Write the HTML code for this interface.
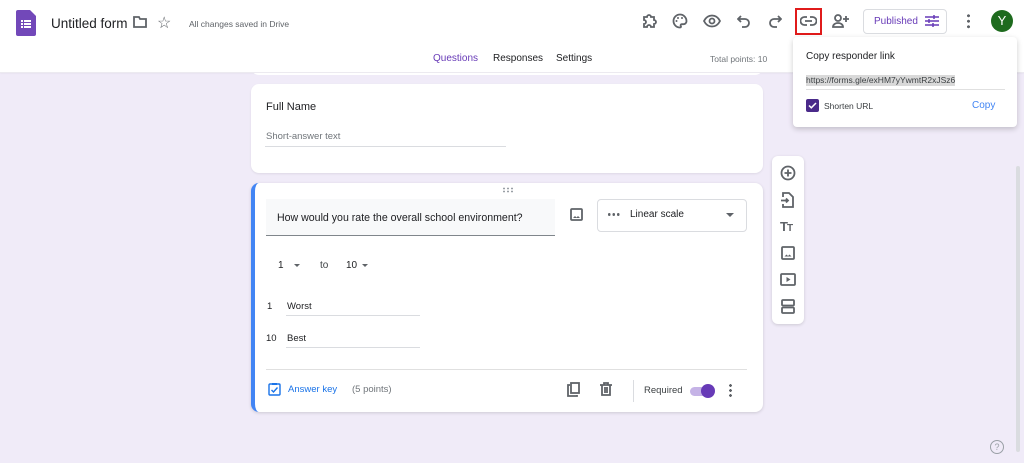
<!DOCTYPE html>
<html><head><meta charset="utf-8"><style>
*{box-sizing:border-box;margin:0;padding:0}
body{width:1024px;height:463px;overflow:hidden;background:#f0ebf8;font-family:"Liberation Sans",sans-serif;position:relative;color:#202124}
.abs{position:absolute}
svg{display:block}
.ic{stroke:#5f6368;fill:none;stroke-width:1.8}
</style></head><body>
<div class="abs" style="left:0;top:0;width:1024px;height:72px;background:#fff;box-shadow:0 1px 2px rgba(0,0,0,.08)"></div>
<svg class="abs" style="left:16px;top:10px" width="20" height="26" viewBox="0 0 20 26"><path d="M0 2a2 2 0 0 1 2-2h12l6 6v18a2 2 0 0 1-2 2H2a2 2 0 0 1-2-2z" fill="#7248b9"/><g fill="#fff"><rect x="5" y="10" width="2" height="2"/><rect x="8" y="10" width="7" height="2"/><rect x="5" y="13" width="2" height="2"/><rect x="8" y="13" width="7" height="2"/><rect x="5" y="16" width="2" height="2"/><rect x="8" y="16" width="7" height="2"/></g></svg>
<div class="abs" style="left:51px;top:16px;font-size:13.5px;color:#202124">Untitled form</div>
<svg class="abs" style="left:133px;top:16px" width="14" height="12" viewBox="0 0 14 12"><path d="M1 1h5l1 2h6v8H1z" class="ic" stroke-width="1.4"/></svg>
<div class="abs" style="left:157px;top:13px;font-size:16px;color:#5f6368">☆</div>
<div class="abs" style="left:189px;top:19px;font-size:8.5px;color:#5f6368">All changes saved in Drive</div>
<svg class="abs" style="left:641px;top:13px" width="16" height="16" viewBox="0 0 16 16"><path d="M3 4h3a2 2 0 0 1 4 0h3v3a2 2 0 0 1 0 4v3H10a2 2 0 0 0-4 0H3v-3a2 2 0 0 0 0-4z" class="ic" stroke-width="1.4"/></svg>
<svg class="abs" style="left:672px;top:13px" width="16" height="16" viewBox="0 0 16 16"><path d="M8 1.5a6.5 6.5 0 0 0 0 13c1 0 1.3-.8.8-1.5-.5-.8 0-1.8 1-1.8h1.700a3 3 0 0 0 3-3C14.5 4.5 11.6 1.5 8 1.5z" class="ic" stroke-width="1.4"/><circle cx="4.5" cy="8" r="1" fill="#5f6368"/><circle cx="6" cy="5" r="1" fill="#5f6368"/><circle cx="10" cy="5" r="1" fill="#5f6368"/></svg>
<svg class="abs" style="left:703px;top:14px" width="18" height="14" viewBox="0 0 18 14"><path d="M1 7c2-4 5-5.5 8-5.5S15 3 17 7c-2 4-5 5.5-8 5.5S3 11 1 7z" class="ic" stroke-width="1.5"/><circle cx="9" cy="7" r="2.5" class="ic" stroke-width="1.5"/></svg>
<svg class="abs" style="left:737px;top:14px" width="14" height="14" viewBox="0 0 14 14"><path d="M4 2L1 5l3 3M1 5h7a4 4 0 0 1 0 8H5" class="ic" stroke-width="1.5"/></svg>
<svg class="abs" style="left:768px;top:14px" width="14" height="14" viewBox="0 0 14 14"><path d="M10 2l3 3-3 3M13 5H6a4 4 0 0 0 0 8h3" class="ic" stroke-width="1.5"/></svg>
<div class="abs" style="left:795px;top:8px;width:27px;height:27px;border:2px solid #e01b1b"></div>
<svg class="abs" style="left:800px;top:15px" width="17" height="12" viewBox="0 0 17 12"><path d="M7 2H4.5a4 4 0 0 0 0 8H7M10 2h2.5a4 4 0 0 1 0 8H10M5 6h7" class="ic" stroke-width="1.6"/></svg>
<svg class="abs" style="left:832px;top:13px" width="18" height="16" viewBox="0 0 18 16"><circle cx="6" cy="5" r="3" class="ic" stroke-width="1.4"/><path d="M1 14c0-3 3-4 5-4s5 1 5 4z" class="ic" stroke-width="1.4"/><path d="M14 3v6M11 6h6" class="ic" stroke-width="1.4"/></svg>
<div class="abs" style="left:863px;top:9px;width:84px;height:25px;border:1px solid #dadce0;border-radius:4px"></div>
<div class="abs" style="left:874px;top:16px;font-size:10px;color:#673ab7">Published</div>
<svg class="abs" style="left:925px;top:14px" width="14" height="14" viewBox="0 0 14 14"><path d="M0 3h14M0 7h14M0 11h14M9 1v4M4 5v4M8 9v4" stroke="#673ab7" stroke-width="1.5" fill="none"/></svg>
<div class="abs" style="left:967px;top:13px;width:3px;height:16px;background:radial-gradient(circle,#5f6368 1.4px,transparent 1.6px) 0 0/3px 5.5px"></div>
<div class="abs" style="left:991px;top:10px;width:22px;height:22px;border-radius:50%;background:#1e6b1e;color:#fff;font-size:13px;text-align:center;line-height:22px">Y</div>
<div class="abs" style="left:433px;top:53px;font-size:10px;color:#673ab7">Questions</div>
<div class="abs" style="left:426px;top:68px;width:58px;height:3px;background:#673ab7;border-radius:3px 3px 0 0"></div>
<div class="abs" style="left:493px;top:53px;font-size:10px;color:#202124">Responses</div>
<div class="abs" style="left:556px;top:53px;font-size:10px;color:#202124">Settings</div>
<div class="abs" style="left:710px;top:54px;font-size:8.5px;color:#70757a">Total points: 10</div>
<div class="abs" style="left:251px;top:66px;width:512px;height:9px;background:#fff;border-radius:0 0 8px 8px"></div>
<div class="abs" style="left:0;top:72px;width:1024px;height:1px;background:#eceaf0"></div>
<div class="abs" style="left:251px;top:84px;width:512px;height:89px;background:#fff;border-radius:8px;box-shadow:0 1px 2px rgba(0,0,0,.08)"></div>
<div class="abs" style="left:266px;top:101px;font-size:11px">Full Name</div>
<div class="abs" style="left:266px;top:131px;font-size:9.5px;color:#70757a">Short-answer text</div>
<div class="abs" style="left:265px;top:146px;width:241px;height:1px;background:#dadce0"></div>
<div class="abs" style="left:251px;top:183px;width:512px;height:229px;background:#fff;border-radius:8px;box-shadow:0 1px 3px rgba(0,0,0,.15);border-left:4px solid #4285f4"></div>
<div class="abs" style="left:502px;top:187px;width:11px;height:6px;background:radial-gradient(circle,#9aa0a6 0.8px,transparent 1px) 0 0/4px 3px"></div>
<div class="abs" style="left:266px;top:199px;width:289px;height:37px;background:#f8f9fa;border-bottom:1px solid #80868b"></div>
<div class="abs" style="left:277px;top:212px;font-size:10.6px">How would you rate the overall school environment?</div>
<svg class="abs" style="left:570px;top:208px" width="13" height="13" viewBox="0 0 13 13"><rect x="1" y="1" width="11" height="11" rx="1" class="ic" stroke-width="1.4"/><path d="M3 10l2-2 1.5 1.5L8 8l2 2z" fill="#5f6368"/></svg>
<div class="abs" style="left:597px;top:199px;width:150px;height:33px;border:1px solid #dadce0;border-radius:4px"></div>
<div class="abs" style="left:607px;top:213px;width:13px;height:3px;background:radial-gradient(circle,#5f6368 1.3px,transparent 1.5px) 0 0/4.5px 3px"></div>
<div class="abs" style="left:630px;top:209px;font-size:10px">Linear scale</div>
<div class="abs" style="left:726px;top:213px;border:4px solid transparent;border-top:4px solid #5f6368"></div>
<div class="abs" style="left:278px;top:260px;font-size:10px">1</div>
<div class="abs" style="left:294px;top:264px;border:3.5px solid transparent;border-top:3.5px solid #5f6368"></div>
<div class="abs" style="left:320px;top:260px;font-size:10px;color:#3c4043">to</div>
<div class="abs" style="left:346px;top:260px;font-size:10px">10</div>
<div class="abs" style="left:362px;top:264px;border:3.5px solid transparent;border-top:3.5px solid #5f6368"></div>
<div class="abs" style="left:267px;top:301px;font-size:9.5px">1</div>
<div class="abs" style="left:287px;top:301px;font-size:9.5px">Worst</div>
<div class="abs" style="left:286px;top:315px;width:134px;height:1px;background:#dadce0"></div>
<div class="abs" style="left:266px;top:333px;font-size:9.5px">10</div>
<div class="abs" style="left:287px;top:333px;font-size:9.5px">Best</div>
<div class="abs" style="left:286px;top:347px;width:134px;height:1px;background:#dadce0"></div>
<div class="abs" style="left:266px;top:369px;width:481px;height:1px;background:#e0e0e0"></div>
<svg class="abs" style="left:268px;top:382px" width="13" height="14" viewBox="0 0 13 14"><rect x="1" y="2" width="11" height="11" rx="1" stroke="#1a73e8" stroke-width="1.4" fill="none"/><path d="M4 1h5v2H4z" fill="#1a73e8"/><path d="M3.5 8l2 2 4-4.5" stroke="#1a73e8" stroke-width="1.4" fill="none"/></svg>
<div class="abs" style="left:288px;top:384px;font-size:9.5px;color:#1a73e8">Answer key</div>
<div class="abs" style="left:352px;top:384px;font-size:9.5px;color:#70757a">(5 points)</div>
<svg class="abs" style="left:567px;top:382px" width="14" height="15" viewBox="0 0 14 15"><path d="M3 3H1v11h9v-1" class="ic" stroke-width="1.4"/><rect x="4" y="1" width="8" height="10" class="ic" stroke-width="1.4"/></svg>
<svg class="abs" style="left:600px;top:382px" width="12" height="14" viewBox="0 0 12 14"><path d="M0 3h12M4 3V1h4v2M2 3v10h8V3M5 5v6M7 5v6" class="ic" stroke-width="1.3"/></svg>
<div class="abs" style="left:633px;top:380px;width:1px;height:22px;background:#dadce0"></div>
<div class="abs" style="left:644px;top:385px;font-size:9.5px;color:#3c4043">Required</div>
<div class="abs" style="left:690px;top:387px;width:24px;height:9px;border-radius:5px;background:#c5b3e6"></div>
<div class="abs" style="left:701px;top:384px;width:14px;height:14px;border-radius:50%;background:#673ab7"></div>
<div class="abs" style="left:729px;top:383px;width:3px;height:14px;background:radial-gradient(circle,#5f6368 1.3px,transparent 1.5px) 0 0/3px 5px"></div>
<div class="abs" style="left:772px;top:156px;width:32px;height:168px;background:#fff;border-radius:6px;box-shadow:0 1px 3px rgba(0,0,0,.15)"></div>
<svg class="abs" style="left:780px;top:165px" width="16" height="16" viewBox="0 0 16 16"><circle cx="8" cy="8" r="6.5" class="ic" stroke-width="1.3"/><path d="M8 4.5v7M4.5 8h7" class="ic" stroke-width="1.3"/></svg>
<svg class="abs" style="left:781px;top:192px" width="14" height="16" viewBox="0 0 14 16"><path d="M2 5V1h6l4 4v10H2v-3M0 8.5h7M5 6.5l2 2-2 2" class="ic" stroke-width="1.3"/></svg>
<div class="abs" style="left:780px;top:219px;font-size:13px;font-weight:bold;color:#5f6368;letter-spacing:-1px">T<span style="font-size:10px">T</span></div>
<svg class="abs" style="left:781px;top:246px" width="14" height="14" viewBox="0 0 14 14"><rect x="1" y="1" width="12" height="12" rx="1" class="ic" stroke-width="1.3"/><path d="M3.5 10.5l2-2 1.5 1.5 1.5-1.5 2 2z" fill="#5f6368"/></svg>
<svg class="abs" style="left:780px;top:273px" width="16" height="13" viewBox="0 0 16 13"><rect x="1" y="1" width="14" height="11" rx="1" class="ic" stroke-width="1.3"/><path d="M6.5 4v5l4-2.5z" fill="#5f6368"/></svg>
<svg class="abs" style="left:781px;top:299px" width="14" height="15" viewBox="0 0 14 15"><rect x="1" y="1" width="12" height="5.5" rx="1" class="ic" stroke-width="1.3"/><rect x="1" y="8.5" width="12" height="5.5" rx="1" class="ic" stroke-width="1.3"/></svg>
<div class="abs" style="left:793px;top:37px;width:224px;height:90px;background:#fff;border-radius:4px;box-shadow:0 2px 6px rgba(0,0,0,.2)"></div>
<div class="abs" style="left:806px;top:51px;font-size:10px">Copy responder link</div>
<div class="abs" style="left:806px;top:75px;font-size:8.5px;color:#3c4043;background:#d9d9d9;line-height:11px">https://forms.gle/exHM7yYwmtR2xJSz6</div>
<div class="abs" style="left:806px;top:89px;width:199px;height:1px;background:#e0e0e0"></div>
<div class="abs" style="left:806px;top:99px;width:13px;height:13px;background:#4a2a8a;border-radius:2px"></div>
<svg class="abs" style="left:808px;top:101px" width="9" height="9" viewBox="0 0 9 9"><path d="M1 4.5l2.3 2.3L8 2" stroke="#fff" stroke-width="1.5" fill="none"/></svg>
<div class="abs" style="left:824px;top:101px;font-size:8.5px;color:#3c4043">Shorten URL</div>
<div class="abs" style="left:972px;top:100px;font-size:10px;color:#4285f4">Copy</div>
<div class="abs" style="left:1016px;top:166px;width:4px;height:286px;background:#dadce0;border-radius:2px"></div>
<div class="abs" style="left:990px;top:440px;width:14px;height:14px;border:1.3px solid #9aa0a6;border-radius:50%;font-size:9px;color:#9aa0a6;text-align:center;line-height:12px">?</div>
</body></html>
